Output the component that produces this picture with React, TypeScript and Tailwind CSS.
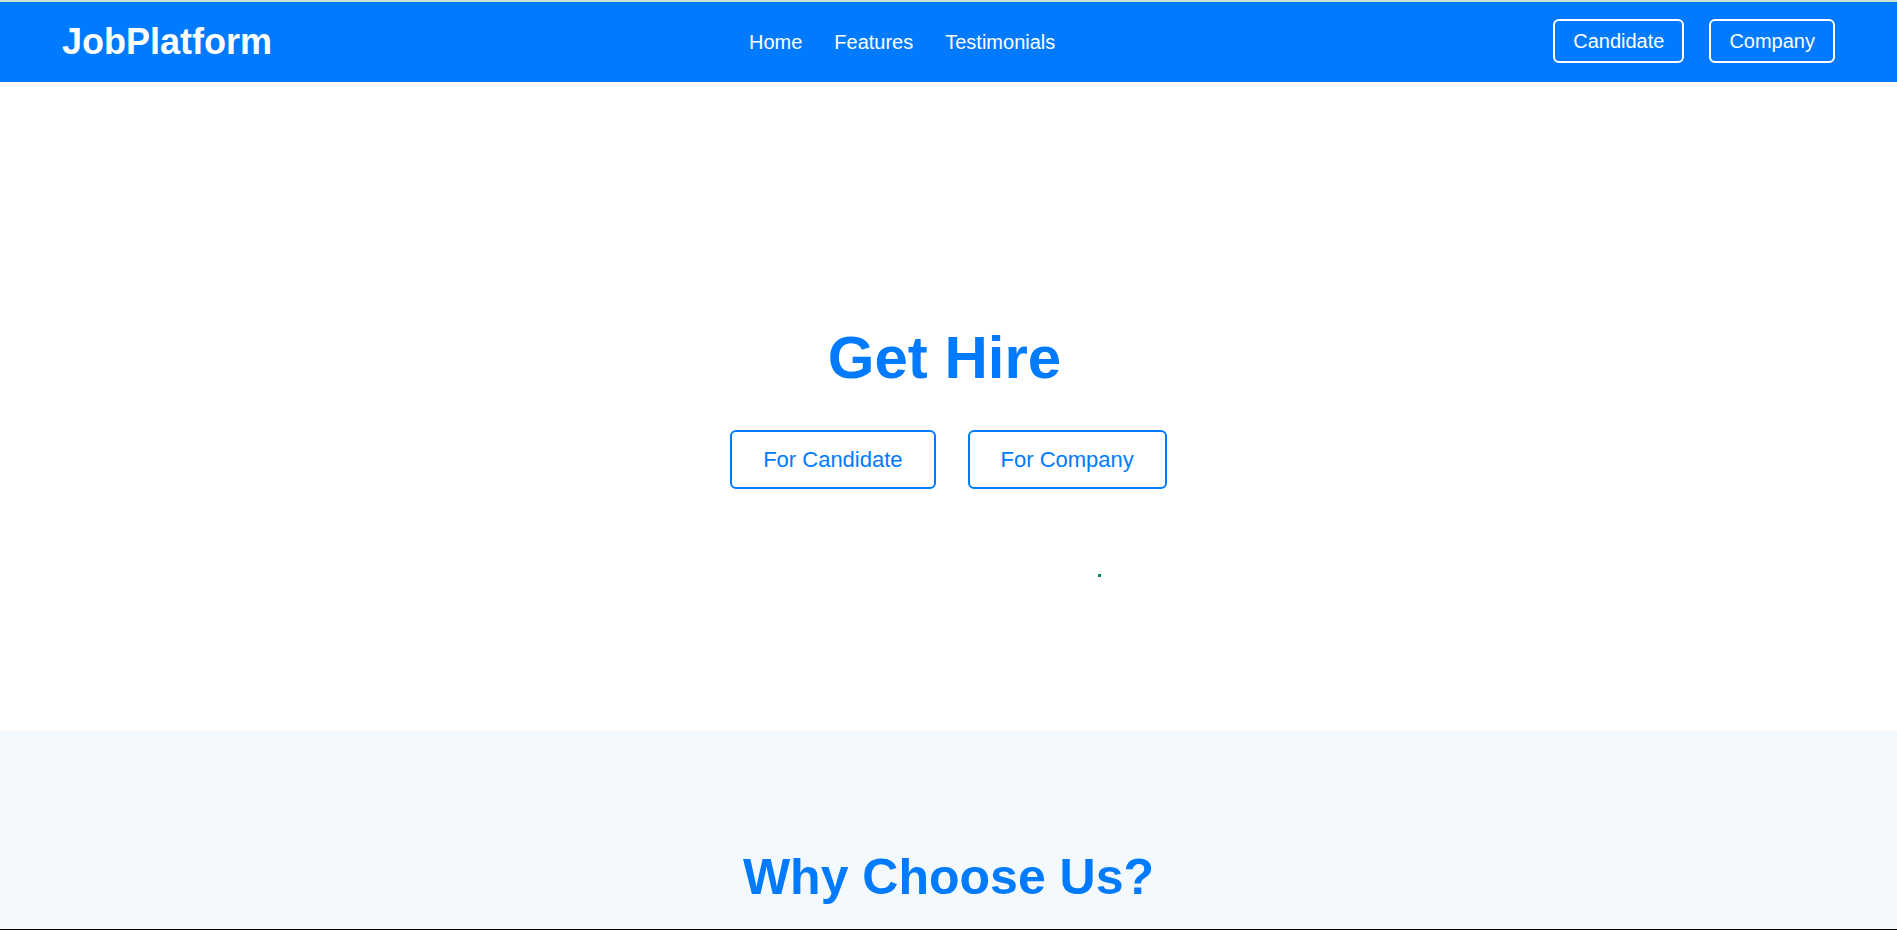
const navLinks = ["Home", "Features", "Testimonials"];

const App = () => {
  return (
    <div className="min-h-screen bg-white font-['Liberation_Sans',Arial,sans-serif]">
      <div className="h-[2px] bg-[#cbe3d3]" />
      <header className="h-[80px] bg-[#007bff] flex items-center justify-between px-[62px]">
        <h1 className="text-[36px] font-bold text-white leading-none">JobPlatform</h1>
        <nav className="flex items-center gap-8 mr-[21px]">
          {navLinks.map((link) => (
            <a key={link} href="#" className="text-[20px] text-white leading-none">
              {link}
            </a>
          ))}
        </nav>
        <div className="flex items-center gap-[25px] -mt-[2px]">
          <button
            type="button"
            className="h-[44px] px-[18px] border-2 border-white rounded-md text-[20px] text-white"
          >
            Candidate
          </button>
          <button
            type="button"
            className="h-[44px] px-[18px] border-2 border-white rounded-md text-[20px] text-white"
          >
            Company
          </button>
        </div>
      </header>

      <section className="relative h-[649px] flex flex-col items-center justify-center">
        <h2 className="text-[60px] font-bold text-[#007bff] leading-[67px] mb-[39px] pr-2">Get Hire</h2>
        <div className="flex items-center gap-8">
          <button
            type="button"
            className="px-[31px] py-[15px] border-2 border-[#007bff] rounded-md text-[22px] leading-[25px] text-[#007bff]"
          >
            For Candidate
          </button>
          <button
            type="button"
            className="px-[31px] py-[15px] border-2 border-[#007bff] rounded-md text-[22px] leading-[25px] text-[#007bff]"
          >
            For Company
          </button>
        </div>
        <span className="absolute left-[1098px] top-[492px] w-[3px] h-[3px] bg-[#0c8a5a]" />
      </section>

      <section className="bg-[#f4f9fd] pt-[118px] pb-20 flex flex-col items-center">
        <h2 className="text-[50px] font-bold text-[#007bff] leading-[56px]">Why Choose Us?</h2>
      </section>

      <div className="fixed bottom-0 left-0 right-0 h-px bg-black" />
    </div>
  );
};

export default App;
